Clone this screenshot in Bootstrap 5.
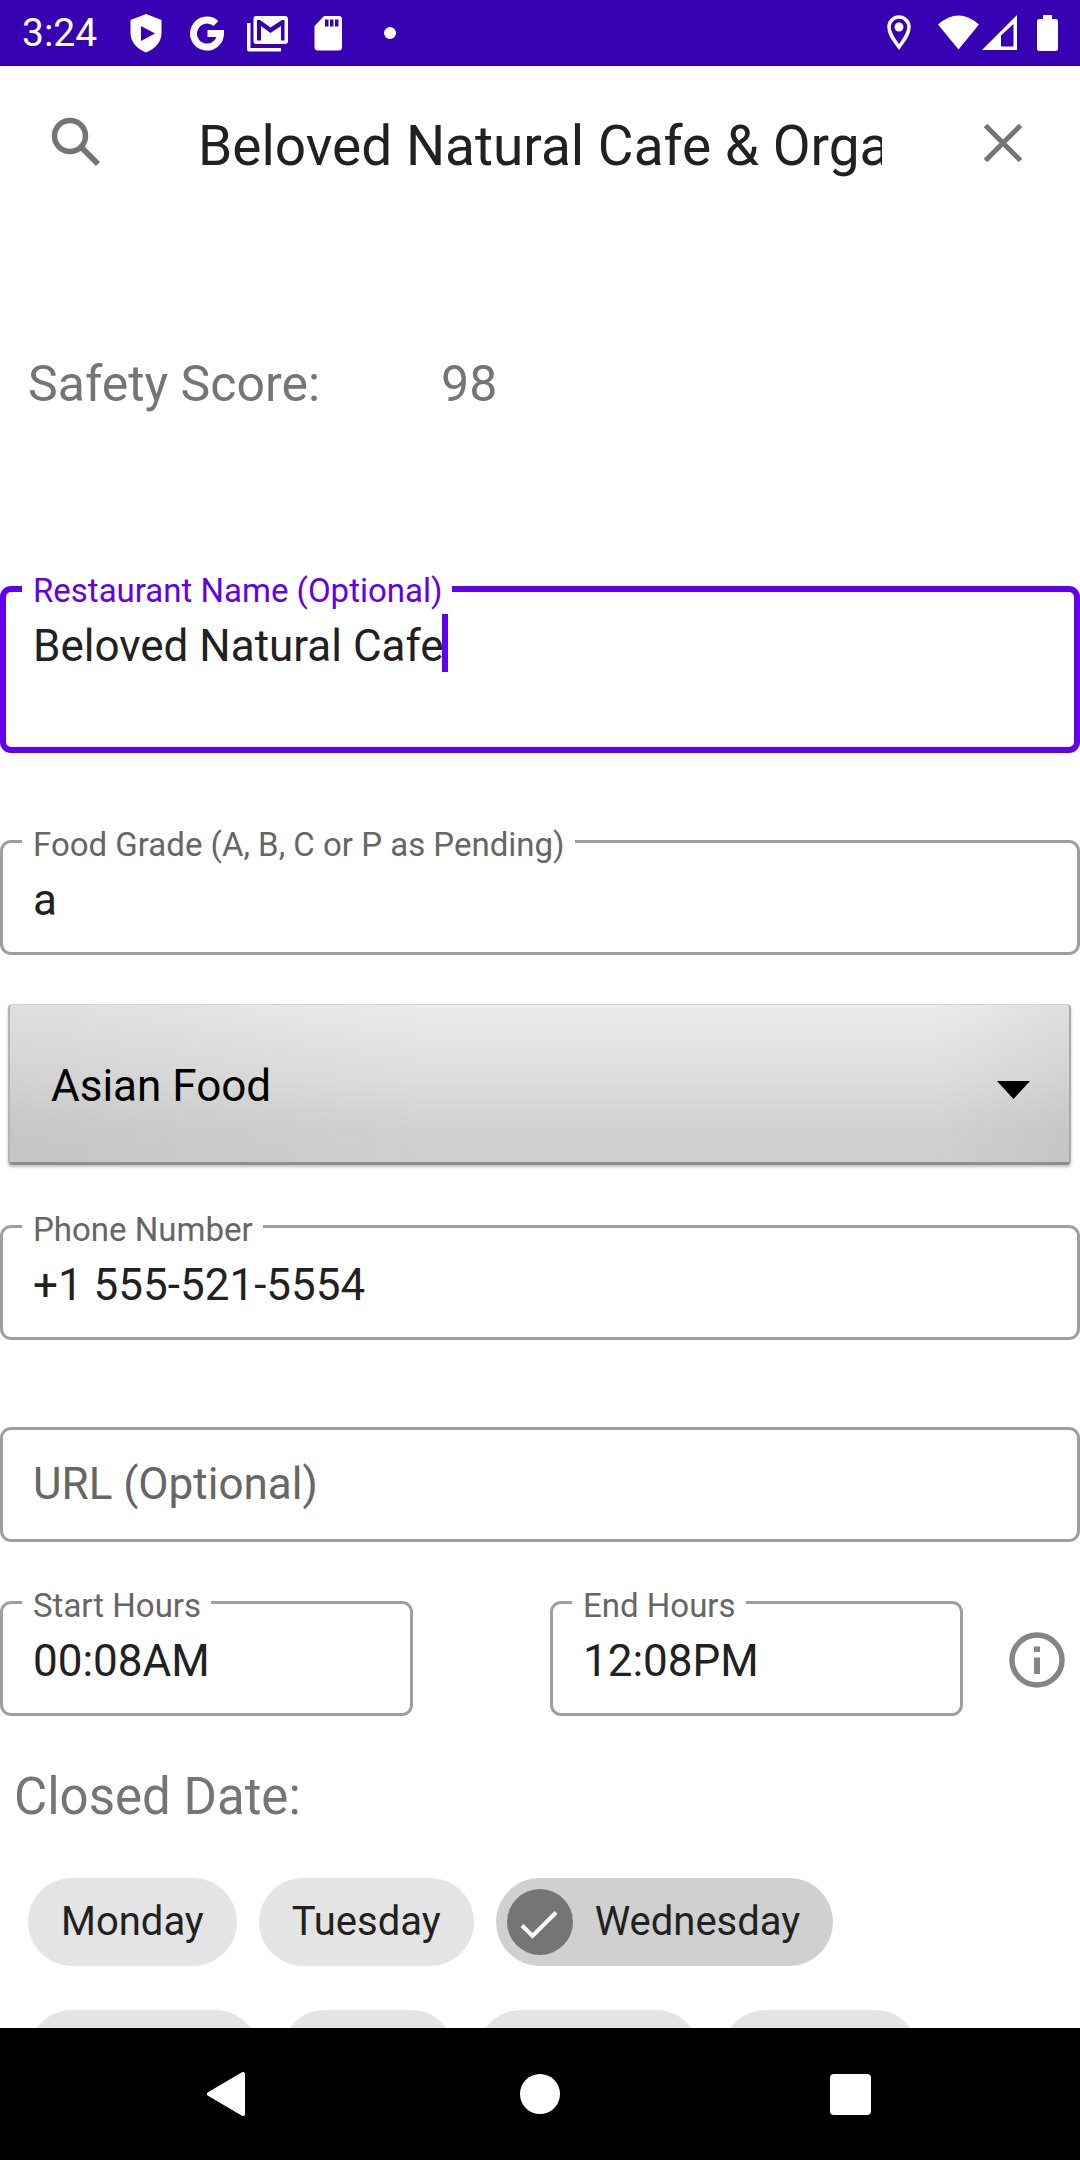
<!DOCTYPE html>
<html lang="en">
<head>
<meta charset="utf-8">
<meta name="viewport" content="width=device-width, initial-scale=1">
<title>Edit restaurant</title>
<link href="https://cdn.jsdelivr.net/npm/bootstrap@5.3.0/dist/css/bootstrap.min.css" rel="stylesheet">
<style>
  :root { --brand: #6200ee; --brand-dark: #3700b3; --line: #9e9e9e; --hint: #666; --muted: #757575; --ink: #212121; }
  body { font-family: Roboto, "Noto Sans", sans-serif; color: var(--ink); background: #fff; }
  svg { display: block; flex: none; }
  .status-bar { height: 66px; background: var(--brand-dark); color: #fff; font-size: 39px; line-height: 68px; padding: 0 16px 0 22px; }
  .status-icons { gap: 11px; margin-left: 24px; }
  .search-row { height: 156px; padding: 0 44px; }
  .icon-btn { border: 0; background: none; padding: 0; color: var(--muted); }
  .search-input { border: 0; padding: 0; font-size: 55px; line-height: 72px; color: var(--ink); outline: 0; min-width: 0; margin: 4px 88px 0 90px; }
  .big-text { font-size: 50px; line-height: 60px; color: var(--muted); }
  .score-row { padding: 132px 28px 0; margin-bottom: 172px; gap: 121px; }
  .closed-title { font-size: 51px; margin: 51px 14px; }
  .field-box { position: relative; }
  .field-box label { position: absolute; left: 22px; top: -12px; padding: 0 10px 0 11px; font-size: 33px; line-height: 34px; color: var(--hint); background: #fff; white-space: nowrap; }
  .field-input { display: block; width: 100%; height: 115px; border: 3px solid var(--line); border-radius: 11px; padding: 5px 30px 0; font-size: 44px; line-height: 52px; color: var(--ink); background: #fff; outline: 0; resize: none; }
  .field-input::placeholder { color: var(--hint); opacity: 1; }
  .field-input.is-blank { padding: 0 30px 2px; }
  .field-input.is-active { height: 167px; border: 6px solid var(--brand); padding: 28px 27px 0; overflow: hidden; caret-color: transparent; }
  .field-box.active-box label { color: var(--brand); }
  .text-caret { position: absolute; left: 442px; top: 28px; width: 6px; height: 58px; background: var(--brand); }
  .spinner-wrap { position: relative; margin: 49px 9px 60px 8px; }
  .spinner-select { display: block; width: 100%; height: 161px; appearance: none; border: 1px solid; border-width: 1px 2px 3px; border-color: #d4d4d4 #aaa #8e8e8e #b4b4b4; border-radius: 4px; padding: 4px 41px 0; font-size: 44px; color: #000; background: linear-gradient(90deg, rgba(0,0,0,.05), transparent 40%, transparent 87%, rgba(0,0,0,.05)), linear-gradient(180deg, #ebebeb 0%, #dddddd 48%, #d1d1d1 80%, #cfcfcf 100%); box-shadow: 0 2px 3px rgba(0,0,0,.25); outline: 0; }
  .spinner-arrow { position: absolute; right: 41px; top: 77px; pointer-events: none; }
  .gap-field { margin-top: 87px; }
  .hours-row { margin-top: 59px; }
  .hours-row .field-box { flex: 0 1 413px; }
  .hours-gap { flex: 0 1 137px; }
  .chip-row { padding: 0 28px; gap: 44px 22px; max-width: 980px; }
  .day-chip { height: 88px; border-radius: 44px; padding: 0 33px; font-size: 40px; line-height: 86px; background: #e4e4e4; cursor: pointer; display: flex; align-items: center; }
  .btn-check:checked + .day-chip { background: #d0d0d0; padding-left: 11px; gap: 22px; }
  .day-chip svg { display: none; }
  .btn-check:checked + .day-chip svg { display: block; }
  .nav-bar { height: 132px; background: #000; }
  .nav-bar .icon-btn { color: #fff; flex: 0 0 311px; display: flex; justify-content: center; }
</style>
<script src="https://cdn.jsdelivr.net/npm/bootstrap@5.3.0/dist/js/bootstrap.bundle.min.js"></script>
</head>
<body>
<div class="d-flex flex-column vh-100 overflow-hidden">
  <header class="status-bar d-flex align-items-center flex-shrink-0">
    <span>3:24</span>
    <div class="status-icons d-flex align-items-center flex-grow-1">
      <svg width="50" height="50" viewBox="0 0 50 50" fill="#fff"><path fill-rule="evenodd" d="M25 6 40.500 12V25C40.500 34 34 41 25 44.500 16 41 9.500 34 9.500 25V12ZM20 18V33L34 25.500Z"/></svg>
      <svg width="50" height="50" viewBox="0 0 50 50" fill="none" stroke="#fff" stroke-width="7"><path d="M34 15.500A13.500 13.500 0 1 0 38.500 25.500H25.500"/></svg>
      <svg width="50" height="50" viewBox="0 0 50 50" fill="#fff"><path d="M4 15H7.500V40H38V43.500H6Q4 43.500 4 41Z"/><path fill-rule="evenodd" d="M13 8H42Q45 8 45 11V33Q45 36 42 36H13Q10.500 36 10.500 33V11Q10.500 8 13 8ZM14 12V32.500H18V18L27.500 25 38 18V32.500H41.500V12H39L27.500 19.500 17 12Z"/></svg>
      <svg width="50" height="50" viewBox="0 0 50 50" fill="#fff"><path fill-rule="evenodd" d="M20 8H35Q38 8 38 11V39Q38 42.500 35 42.500H14Q10.500 42.500 10.500 39V18ZM21 11.500V18.500H24.500V11.500ZM26 11.500V18.500H29.500V11.500ZM31 11.500V18.500H34.500V11.500Z"/></svg>
      <svg width="50" height="50" viewBox="0 0 50 50" fill="#fff"><circle cx="25" cy="25" r="6"/></svg>
    </div>
    <div class="d-flex align-items-center">
      <svg width="56" height="50" viewBox="0 0 56 50"><path fill="none" stroke="#fff" stroke-width="3.500" d="M18 39C13 32 8 26 8 19A10 10 0 0 1 28 19C28 26 23 32 18 39Z"/><circle cx="18" cy="19" r="4.500" fill="#fff"/></svg>
      <svg width="45" height="50" viewBox="0 0 45 50" fill="#fff"><path d="M1 16.500Q21.500-1.500 42 16.500L21.500 41.500Z"/></svg>
      <svg width="48" height="50" viewBox="0 0 48 50" fill="#fff"><path fill-rule="evenodd" d="M0 42 35 7V42ZM19 27.500V38.500H31.500V16Z"/></svg>
      <svg width="34" height="50" viewBox="0 0 34 50" fill="#fff"><path d="M13 7H22V11H25.500Q28 11 28 13V41Q28 43 25.500 43H9Q7 43 7 41V13Q7 11 9 11H13Z"/></svg>
    </div>
  </header>

  <main class="flex-grow-1 overflow-hidden" style="min-height:0">
    <form class="search-row d-flex align-items-center" role="search">
      <button class="icon-btn" type="button" aria-label="Search"><svg width="64" height="66" viewBox="0 0 64 66" fill="none" stroke="currentColor"><circle cx="26" cy="25" r="15.500" stroke-width="5.500"/><path stroke-width="6" d="M37 36 54 53"/></svg></button>
      <input class="search-input flex-grow-1" type="text" aria-label="Search restaurants" value="Beloved Natural Cafe &amp; Orga">
      <button class="icon-btn" type="button" aria-label="Clear"><svg width="66" height="66" viewBox="0 0 66 66" fill="none" stroke="currentColor" stroke-width="5"><path d="M15.500 14.500 50.500 49.500M50.500 14.500 15.500 49.500"/></svg></button>
    </form>

    <div class="score-row big-text d-flex"><span>Safety Score:</span><span>98</span></div>

    <div class="field-box active-box">
      <textarea class="field-input is-active" id="name" spellcheck="false">Beloved Natural Cafe</textarea>
      <label for="name">Restaurant Name (Optional)</label>
      <span class="text-caret"></span>
    </div>
    <div class="field-box gap-field">
      <input class="field-input" id="grade" type="text" value="a">
      <label for="grade">Food Grade (A, B, C or P as Pending)</label>
    </div>
    <div class="spinner-wrap">
      <select class="spinner-select" aria-label="Cuisine"><option>Asian Food</option></select>
      <svg class="spinner-arrow" width="33" height="18" viewBox="0 0 33 18"><path d="M0 0H33L16.500 18Z"/></svg>
    </div>
    <div class="field-box">
      <input class="field-input" id="phone" type="tel" value="+1 555-521-5554">
      <label for="phone">Phone Number</label>
    </div>
    <div class="gap-field">
      <input class="field-input is-blank" type="url" aria-label="URL (Optional)" placeholder="URL (Optional)">
    </div>
    <div class="hours-row d-flex align-items-center">
      <div class="field-box">
        <input class="field-input" id="start" type="text" value="00:08AM">
        <label for="start">Start Hours</label>
      </div>
      <div class="hours-gap"></div>
      <div class="field-box">
        <input class="field-input" id="end" type="text" value="12:08PM">
        <label for="end">End Hours</label>
      </div>
      <button class="icon-btn ms-auto me-2" type="button" aria-label="Hours help"><svg width="70" height="66" viewBox="0 0 70 66" fill="#858585"><circle cx="35" cy="34" r="25" fill="none" stroke="#858585" stroke-width="5.500"/><path d="M32 20.500H38V26H32ZM32 31.500H38V48H32Z"/></svg></button>
    </div>

    <h2 class="big-text closed-title fw-normal">Closed Date:</h2>

    <div class="chip-row d-flex flex-wrap">
      <input class="btn-check" type="checkbox" id="mon"><label class="day-chip" for="mon">Monday</label>
      <input class="btn-check" type="checkbox" id="tue"><label class="day-chip" for="tue">Tuesday</label>
      <input class="btn-check" type="checkbox" id="wed" checked><label class="day-chip" for="wed"><svg width="66" height="66" viewBox="0 0 66 66"><circle cx="33" cy="33" r="33" fill="#757575"/><path fill="none" stroke="#fff" stroke-width="4" d="M15 36.500 25.500 47 49 23.500"/></svg>Wednesday</label>
      <input class="btn-check" type="checkbox" id="thu"><label class="day-chip" for="thu">Thursday</label>
      <input class="btn-check" type="checkbox" id="fri"><label class="day-chip" for="fri">Friday</label>
      <input class="btn-check" type="checkbox" id="sat"><label class="day-chip" for="sat">Saturday</label>
      <input class="btn-check" type="checkbox" id="sun"><label class="day-chip" for="sun">Sunday</label>
    </div>
  </main>

  <nav class="nav-bar d-flex align-items-center justify-content-center flex-shrink-0">
    <button class="icon-btn" type="button" aria-label="Back"><svg width="44" height="50" viewBox="0 0 44 50" fill="#fff" stroke="#fff" stroke-width="4" stroke-linejoin="round"><path d="M2 25 36 5V45Z"/></svg></button>
    <button class="icon-btn" type="button" aria-label="Home"><svg width="44" height="50" viewBox="0 0 44 50" fill="#fff"><circle cx="22" cy="25" r="20"/></svg></button>
    <button class="icon-btn" type="button" aria-label="Recent apps"><svg width="44" height="50" viewBox="0 0 44 50" fill="#fff"><rect x="1" y="5" width="41" height="41" rx="4"/></svg></button>
  </nav>
</div>
</body>
</html>
